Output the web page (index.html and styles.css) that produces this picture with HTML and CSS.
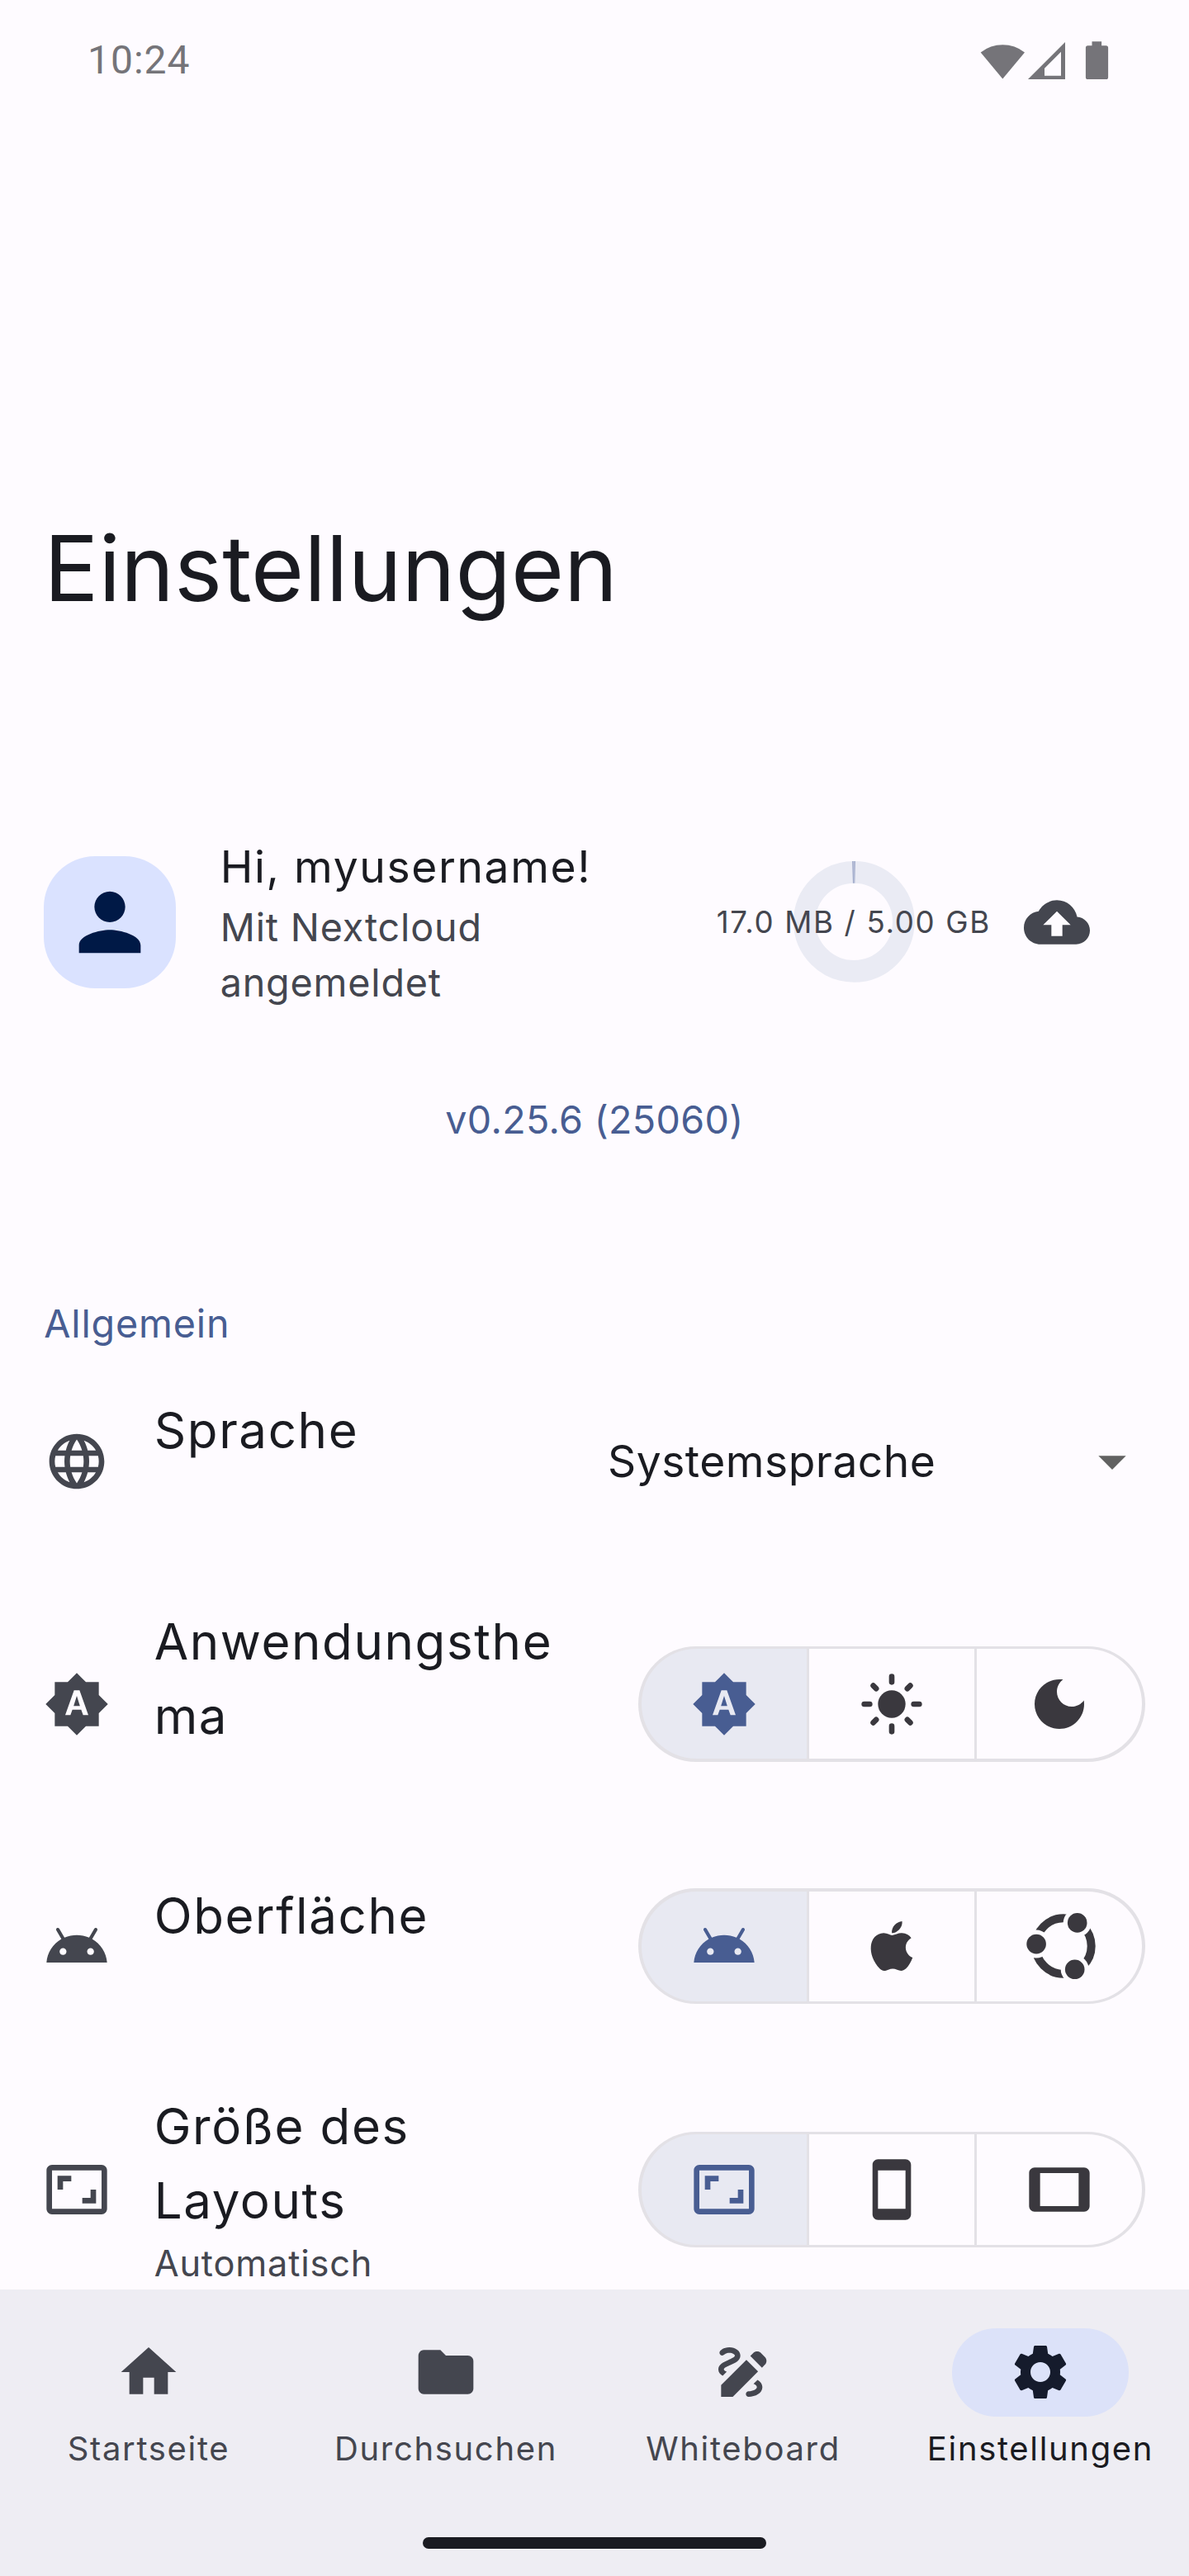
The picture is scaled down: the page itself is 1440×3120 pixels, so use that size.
FILE: index.html
```html
<!DOCTYPE html>
<html lang="de">
<head>
<meta charset="utf-8">
<meta name="viewport" content="width=device-width, initial-scale=1">
<title>Einstellungen</title>
<link rel="stylesheet" href="styles.css">
</head>
<body>
<svg class="sprite" aria-hidden="true">
  <symbol id="i-auto" viewBox="0 0 24 24"><path d="M10.85 12.65h2.3L12 9l-1.15 3.65zM20 8.69V4h-4.69L12 .69 8.69 4H4v4.69L.69 12 4 15.31V20h4.69L12 23.31 15.31 20H20v-4.69L23.31 12 20 8.69zM14.3 16l-.7-2h-3.2l-.7 2H7.8L11 7h2l3.2 9h-1.9z"/></symbol>
  <symbol id="i-android" viewBox="0 0 24 24"><path d="M17.6 9.48l1.84-3.18c.16-.31.04-.69-.26-.85-.29-.15-.65-.06-.83.22l-1.88 3.24c-2.86-1.21-6.08-1.21-8.94 0L5.65 5.67c-.19-.29-.58-.38-.87-.2-.28.18-.37.54-.22.83L6.4 9.48C3.3 11.25 1.28 14.44 1 18h22c-.28-3.56-2.3-6.75-5.4-8.52zM7 15.25c-.69 0-1.25-.56-1.25-1.25S6.31 12.75 7 12.75s1.25.56 1.25 1.25S7.69 15.25 7 15.25zm10 0c-.69 0-1.25-.56-1.25-1.25s.56-1.25 1.25-1.25 1.25.56 1.25 1.25-.56 1.25-1.25 1.25z"/></symbol>
  <symbol id="i-aspect" viewBox="0 0 24 24"><path d="M19 12h-2v3h-3v2h5v-5zM7 9h3V7H5v5h2V9zm14-6H3c-1.1 0-2 .9-2 2v14c0 1.1.9 2 2 2h18c1.1 0 2-.9 2-2V5c0-1.1-.9-2-2-2zm0 16.01H3V4.99h18v14.02z"/></symbol>
</svg>

<div class="screen">
  <header class="status">
    <span class="time">10:24</span>
    <svg class="status-icons" width="156" height="48" viewBox="0 0 156 48">
      <path d="M0.7 14.6A42.5 42.5 0 0 1 54 14.6L27.3 46.6Z"/>
      <path fill-rule="evenodd" d="M58 47H103V2ZM78 33.8V42.7H98V13.8Z"/>
      <path d="M135.5 1.2h11.6v5h5.4a2.6 2.6 0 0 1 2.6 2.6v35.6a2.6 2.6 0 0 1-2.6 2.6h-22a2.6 2.6 0 0 1-2.6-2.6V8.8a2.6 2.6 0 0 1 2.6-2.6h5z"/>
    </svg>
  </header>

  <h1 class="title">Einstellungen</h1>

  <section class="account">
    <div class="avatar">
      <svg viewBox="0 0 24 24"><path d="M12 12c2.21 0 4-1.79 4-4s-1.79-4-4-4-4 1.79-4 4 1.79 4 4 4zm0 2c-2.67 0-8 1.34-8 4v2h16v-2c0-2.66-5.33-4-8-4z"/></svg>
    </div>
    <div class="account-text">
      <div class="account-name">Hi, myusername!</div>
      <div class="account-state">Mit Nextcloud angemeldet</div>
    </div>
    <div class="quota">
      <svg class="ring" viewBox="0 0 44 44">
        <circle class="ring-track" cx="22" cy="22" r="18"/>
        <circle class="ring-value" cx="22" cy="22" r="18" pathLength="1000" transform="rotate(-90 22 22)"/>
      </svg>
      <span class="quota-text">17.0 MB / 5.00 GB</span>
    </div>
    <svg class="icon cloud" viewBox="0 0 24 24"><path d="M19.35 10.04C18.67 6.59 15.64 4 12 4 9.11 4 6.6 5.64 5.35 8.04 2.34 8.36 0 10.91 0 14c0 3.31 2.69 6 6 6h13c2.76 0 5-2.24 5-5 0-2.64-2.05-4.78-4.65-4.96zM14 13v4h-4v-4H7l5-5 5 5h-3z"/></svg>
  </section>

  <p class="version">v0.25.6 (25060)</p>

  <h2 class="section">Allgemein</h2>

  <main class="rows">
    <div class="row">
      <svg class="icon lead" viewBox="0 0 24 24"><path d="M11.99 2C6.47 2 2 6.48 2 12s4.47 10 9.99 10C17.52 22 22 17.52 22 12S17.52 2 11.99 2zm6.93 6h-2.95c-.32-1.25-.78-2.45-1.38-3.56 1.84.63 3.37 1.91 4.33 3.56zM12 4.04c.83 1.2 1.48 2.53 1.91 3.96h-3.82c.43-1.43 1.08-2.76 1.91-3.96zM4.26 14C4.1 13.36 4 12.69 4 12s.1-1.36.26-2h3.38c-.08.66-.14 1.32-.14 2 0 .68.06 1.34.14 2H4.26zm.82 2h2.95c.32 1.25.78 2.45 1.38 3.56-1.84-.63-3.37-1.9-4.33-3.56zm2.95-8H5.08c.96-1.66 2.49-2.93 4.33-3.56C8.81 5.55 8.35 6.75 8.03 8zM12 19.96c-.83-1.2-1.48-2.53-1.91-3.96h3.82c-.43 1.43-1.08 2.76-1.91 3.96zM14.34 14H9.66c-.09-.66-.16-1.32-.16-2 0-.68.07-1.35.16-2h4.68c.09.65.16 1.32.16 2 0 .68-.07 1.34-.16 2zm.25 5.56c.6-1.11 1.06-2.31 1.38-3.56h2.95c-.96 1.65-2.49 2.93-4.33 3.56zM16.36 14c.08-.66.14-1.32.14-2 0-.68-.06-1.34-.14-2h3.38c.16.64.26 1.31.26 2s-.1 1.36-.26 2h-3.38z"/></svg>
      <div class="row-text"><div class="row-title">Sprache</div></div>
      <div class="select">
        <span>Systemsprache</span>
        <svg class="icon arrow" viewBox="0 0 24 24"><path d="M7 10l5 5 5-5z"/></svg>
      </div>
    </div>

    <div class="row tall">
      <svg class="icon lead"><use href="#i-auto"/></svg>
      <div class="row-text"><div class="row-title">Anwendungsthema</div></div>
      <div class="segments">
        <div class="segment selected"><svg class="icon"><use href="#i-auto"/></svg></div>
        <div class="segment"><svg class="icon" viewBox="0 0 24 24"><circle cx="12" cy="12" r="5"/><path class="rays" d="M12 2v2M12 20v2M2 12h2M20 12h2M5.28 5.28l1.06 1.06M17.66 17.66l1.06 1.06M5.28 18.72l1.06-1.06M17.66 6.34l1.06-1.06"/></svg></div>
        <div class="segment"><svg class="icon" viewBox="0 0 24 24"><path d="M12 3c-4.97 0-9 4.03-9 9s4.03 9 9 9 9-4.03 9-9c0-.46-.04-.92-.1-1.36-.98 1.37-2.58 2.26-4.4 2.26-2.98 0-5.4-2.42-5.4-5.4 0-1.81.89-3.42 2.26-4.4-.44-.06-.9-.1-1.36-.1z"/></svg></div>
      </div>
    </div>

    <div class="row">
      <svg class="icon lead"><use href="#i-android"/></svg>
      <div class="row-text"><div class="row-title">Oberfläche</div></div>
      <div class="segments">
        <div class="segment selected"><svg class="icon"><use href="#i-android"/></svg></div>
        <div class="segment"><svg class="icon" viewBox="0 0 24 24"><path d="M17.05 20.28c-.98.95-2.05.8-3.08.35-1.09-.46-2.09-.48-3.24 0-1.44.62-2.2.44-3.06-.35C2.79 15.25 3.51 7.59 9.05 7.31c1.35.07 2.29.74 3.08.8 1.18-.24 2.31-.93 3.57-.84 1.51.12 2.65.72 3.4 1.8-3.12 1.87-2.38 5.98.48 7.13-.57 1.5-1.31 2.99-2.54 4.09zM12.03 7.25c-.15-2.23 1.66-4.07 3.74-4.25.29 2.58-2.34 4.5-3.74 4.25z"/></svg></div>
        <div class="segment"><svg class="icon friends" viewBox="0 0 80 80">
          <mask id="gaps" maskUnits="userSpaceOnUse" x="0" y="-10" width="100" height="100">
            <rect x="0" y="-10" width="100" height="100" fill="#fff"/>
            <g fill="#000"><circle cx="12.1" cy="37.6" r="17"/><circle cx="61.7" cy="11.9" r="17"/><circle cx="58.7" cy="68.3" r="17"/></g>
          </mask>
          <circle class="friends-ring" cx="45" cy="40" r="33.7" mask="url(#gaps)"/>
          <circle cx="12.1" cy="37.6" r="11.8"/><circle cx="61.7" cy="11.9" r="11.8"/><circle cx="58.7" cy="68.3" r="11.8"/>
        </svg></div>
      </div>
    </div>

    <div class="row tall">
      <svg class="icon lead"><use href="#i-aspect"/></svg>
      <div class="row-text"><div class="row-title">Größe des Layouts</div><div class="row-sub">Automatisch</div></div>
      <div class="segments">
        <div class="segment selected"><svg class="icon"><use href="#i-aspect"/></svg></div>
        <div class="segment"><svg class="icon" viewBox="0 0 24 24"><path d="M17 1.01L7 1c-1.1 0-1.99.9-1.99 2v18c0 1.1.89 2 1.99 2h10c1.1 0 2-.9 2-2V3c0-1.1-.9-1.99-2-1.99zM17 19H7V5h10v14z"/></svg></div>
        <div class="segment"><svg class="icon" viewBox="0 0 24 24"><path d="M21 4H3c-1.1 0-2 .9-2 2v12c0 1.1.9 2 2 2h18c1.1 0 1.99-.9 1.99-2L23 6c0-1.1-.9-2-2-2zm-2 14H5V6h14v12z"/></svg></div>
      </div>
    </div>
  </main>

  <nav class="nav">
    <div class="nav-items">
      <div class="nav-item">
        <div class="pill"><svg class="icon" viewBox="0 0 24 24"><path d="M10 20v-6h4v6h5v-8h3L12 3 2 12h3v8z"/></svg></div>
        <span>Startseite</span>
      </div>
      <div class="nav-item">
        <div class="pill"><svg class="icon" viewBox="0 0 24 24"><path d="M10 4H4c-1.1 0-1.99.9-1.99 2L2 18c0 1.1.9 2 2 2h16c1.1 0 2-.9 2-2V8c0-1.1-.9-2-2-2h-8l-2-2z"/></svg></div>
        <span>Durchsuchen</span>
      </div>
      <div class="nav-item">
        <div class="pill"><svg class="icon" viewBox="0 0 24 24"><path d="M18.85 10.39l1.06-1.06c.78-.78.78-2.05 0-2.83L18.5 5.09c-.78-.78-2.05-.78-2.83 0l-1.06 1.06 4.24 4.24zm-5.66-2.83L4 16.76V21h4.24l9.19-9.19-4.24-4.25zM19 17.5c0 2.19-2.54 3.5-5 3.5-.55 0-1-.45-1-1s.45-1 1-1c1.54 0 3-.73 3-1.5 0-.47-.48-.87-1.23-1.2l1.48-1.48c1.07.63 1.75 1.47 1.75 2.68zM4.58 13.35C3.61 12.79 3 12.06 3 11c0-1.8 1.89-2.63 3.56-3.36C7.59 7.18 9 6.56 9 6c0-.41-.78-1-2-1-1.26 0-1.8.61-1.83.64-.35.41-.98.46-1.4.12-.41-.34-.49-.95-.15-1.38C3.73 4.24 4.76 3 7 3s4 1.32 4 3c0 1.87-1.93 2.72-3.64 3.47C6.42 9.88 5 10.5 5 11c0 .31.43.6 1.07.86l-1.49 1.49z"/></svg></div>
        <span>Whiteboard</span>
      </div>
      <div class="nav-item active">
        <div class="pill"><svg class="icon" viewBox="0 0 24 24"><path d="M19.14 12.94c.04-.3.06-.61.06-.94 0-.32-.02-.64-.07-.94l2.03-1.58c.18-.14.23-.41.12-.61l-1.92-3.32c-.12-.22-.37-.29-.59-.22l-2.39.96c-.5-.38-1.03-.7-1.62-.94l-.36-2.54c-.04-.24-.24-.41-.48-.41h-3.84c-.24 0-.43.17-.47.41l-.36 2.54c-.59.24-1.13.57-1.62.94l-2.39-.96c-.22-.08-.47 0-.59.22L2.74 8.87c-.12.21-.08.47.12.61l2.03 1.58c-.05.3-.09.63-.09.94s.02.64.07.94l-2.03 1.58c-.18.14-.23.41-.12.61l1.92 3.32c.12.22.37.29.59.22l2.39-.96c.5.38 1.03.7 1.62.94l.36 2.54c.05.24.24.41.48.41h3.84c.24 0 .44-.17.47-.41l.36-2.54c.59-.24 1.13-.56 1.62-.94l2.39.96c.22.08.47 0 .59-.22l1.92-3.32c.12-.22.07-.47-.12-.61l-2.01-1.58zM12 15.6c-1.98 0-3.6-1.62-3.6-3.6s1.62-3.6 3.6-3.6 3.6 1.62 3.6 3.6-1.62 3.6-3.6 3.6z"/></svg></div>
        <span>Einstellungen</span>
      </div>
    </div>
    <div class="home-handle"></div>
  </nav>
</div>
</body>
</html>
```
FILE: styles.css
```css
:root {
  --surface: #fefbff;
  --on-surface: #1a1b21;
  --on-surface-variant: #44464f;
  --primary: #485d92;
  --outline: #e3e1e6;
}

* { box-sizing: border-box; margin: 0; padding: 0; }

body {
  background: var(--surface);
  color: var(--on-surface);
  font-family: Inter, "Liberation Sans", sans-serif;
  font-weight: 400;
}

svg { display: block; flex: none; overflow: visible; fill: currentColor; }

.sprite { position: absolute; width: 0; height: 0; }
.icon { width: 80px; height: 80px; }

.screen {
  width: 1440px;
  height: 3120px;
  display: flex;
  flex-direction: column;
  overflow: hidden;
}

/* Status bar */
.status {
  flex: none;
  height: 145px;
  padding: 0 97px 0 106px;
  display: flex;
  align-items: center;
  justify-content: space-between;
  color: #757479;
}
.time { font: 48px/56px Roboto, sans-serif; letter-spacing: 1px; }

.title {
  flex: none;
  padding: 473px 53.33px 0;
  font-size: 110px;
  line-height: 140px;
  font-weight: 400;
}

/* Account card */
.account {
  flex: none;
  height: 213.33px;
  margin-top: 252px;
  padding: 0 120px 0 53.33px;
  display: flex;
  align-items: center;
}
.avatar {
  width: 160px;
  height: 160px;
  border-radius: 62px;
  background: #dae2ff;
  color: #001946;
  display: flex;
  align-items: center;
  justify-content: center;
}
.avatar svg { width: 112px; height: 112px; }
.account-text { width: 480px; margin-left: 53.33px; }
.account-name { font-size: 53.33px; line-height: 80px; letter-spacing: 1.63px; }
.account-state {
  width: 400px;
  font-size: 46.67px;
  line-height: 66.67px;
  letter-spacing: .83px;
  color: var(--on-surface-variant);
}
.quota { display: grid; place-items: center; margin-left: auto; color: var(--on-surface-variant); }
.quota > * { grid-area: 1 / 1; }
.ring { width: 146.67px; height: 146.67px; fill: none; }
.ring circle { stroke-width: 8; }
.ring-track { stroke: #eaebf4; }
.ring-value { stroke: #99a4c6; stroke-dasharray: 3.4 996.6; }
.quota-text { z-index: 1; font-size: 36.67px; line-height: 53.33px; letter-spacing: 1.67px; white-space: nowrap; }
.cloud { margin-left: 40px; color: var(--on-surface-variant); }

.version {
  flex: none;
  margin-top: 99.7px;
  text-align: center;
  font-size: 46.67px;
  line-height: 66px;
  letter-spacing: .33px;
  color: var(--primary);
}

.section {
  flex: none;
  margin-top: 181px;
  padding: 0 53.33px;
  font-size: 46.67px;
  line-height: 66px;
  font-weight: 400;
  letter-spacing: .83px;
  color: var(--primary);
}

/* Settings rows */
.rows {
  flex: none;
  height: 1137.3px;
  padding: 51px 53.33px 0;
  display: flex;
  flex-direction: column;
  gap: 90px;
}
.row { flex: none; min-height: 165.6px; display: flex; align-items: center; }
.row.tall { min-height: 242px; }
.row.tall:last-child { min-height: 243.3px; }
.lead { color: var(--on-surface-variant); }
.row-text { flex: 1; align-self: stretch; min-width: 0; padding-right: 80px; margin-left: 53.33px; }
.row-title { font-size: 60px; line-height: 90px; letter-spacing: 1.62px; overflow-wrap: anywhere; }
.row-sub { font-size: 43.33px; line-height: 62px; letter-spacing: .83px; color: var(--on-surface-variant); }

.select {
  width: 650.7px;
  display: flex;
  align-items: center;
  justify-content: space-between;
  font-size: 53.33px;
  line-height: 80px;
  letter-spacing: .5px;
}
.arrow { color: #616161; }

.segments {
  width: 613.33px;
  height: 140px;
  padding: 3.33px;
  border-radius: 70px;
  overflow: hidden;
  display: grid;
  grid-template-columns: repeat(3, 1fr);
  gap: 3.33px;
  background: var(--outline);
  color: #3a383e;
}
.segment { display: flex; align-items: center; justify-content: center; background: var(--surface); }
.segment:first-child { border-radius: 66.67px 0 0 66.67px; }
.segment:last-child { border-radius: 0 66.67px 66.67px 0; }
.segment.selected { background: #e8e9f2; color: var(--primary); }
.rays { fill: none; stroke: currentColor; stroke-width: 2; stroke-linecap: round; }
.friends-ring { fill: none; stroke: currentColor; stroke-width: 10; }

/* Bottom navigation */
.nav {
  flex: 1;
  padding: 46.67px 0 33.3px;
  display: flex;
  flex-direction: column;
  justify-content: space-between;
  align-items: center;
  background: #eeedf3;
}
.nav-items { width: 100%; display: grid; grid-template-columns: repeat(4, 1fr); }
.nav-item {
  display: flex;
  flex-direction: column;
  align-items: center;
  gap: 12px;
  font-size: 40px;
  line-height: 53.33px;
  letter-spacing: 1.67px;
  color: var(--on-surface-variant);
}
.pill {
  width: 213.33px;
  height: 106.67px;
  border-radius: 53.33px;
  display: flex;
  align-items: center;
  justify-content: center;
}
.active { color: var(--on-surface); }
.active .pill { background: #dce2f9; color: #151b2c; }
.home-handle { width: 416px; height: 13.5px; border-radius: 7px; background: var(--on-surface); }
```
